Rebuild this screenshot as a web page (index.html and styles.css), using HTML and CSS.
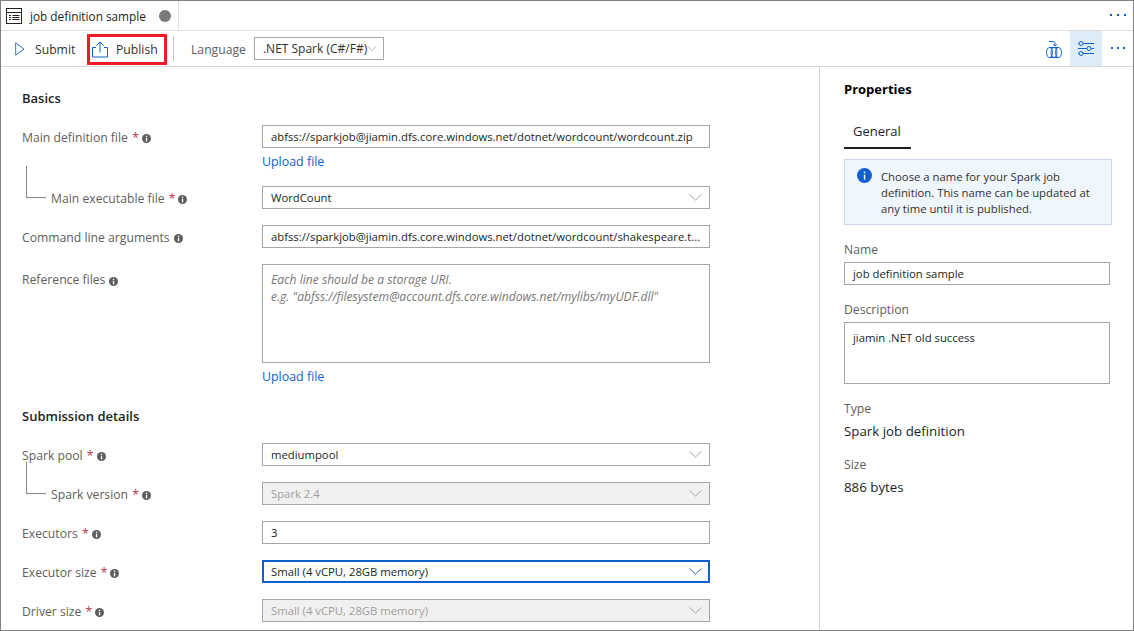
FILE: index.html
```html
<!DOCTYPE html>
<html lang="en">
<head>
  <meta charset="UTF-8">
  <title>job definition sample</title>
  <link rel="stylesheet" href="styles.css">
</head>
<body>
  <svg class="defs" width="0" height="0" aria-hidden="true">
    <symbol id="info" viewBox="0 0 9 9">
      <circle cx="4.5" cy="4.5" r="4.5" fill="#605e5c"/>
      <rect x="3.9" y="3.8" width="1.3" height="3.6" fill="#fff"/>
      <rect x="3.9" y="1.7" width="1.3" height="1.3" fill="#fff"/>
    </symbol>
    <symbol id="chev" viewBox="0 0 13 7">
      <path d="M.5.5l6 5.500 6-5.500" fill="none" stroke="currentColor" stroke-width="1"/>
    </symbol>
    <symbol id="dots" viewBox="0 0 16 3">
      <rect x="0" y="0" width="2" height="2" fill="#0f62c9"/>
      <rect x="7" y="0" width="2" height="2" fill="#0f62c9"/>
      <rect x="14" y="0" width="2" height="2" fill="#0f62c9"/>
    </symbol>
    <symbol id="dots-sm" viewBox="0 0 14 3">
      <rect x="0" y="0" width="2" height="2" fill="#0f62c9"/>
      <rect x="6" y="0" width="2" height="2" fill="#0f62c9"/>
      <rect x="12" y="0" width="2" height="2" fill="#0f62c9"/>
    </symbol>
  </svg>

  <div class="window">
    <header class="tabbar">
      <div class="tab">
        <svg class="tab-icon" width="16" height="16" viewBox="0 0 16 16">
          <rect x="0.5" y="0.5" width="15" height="15" fill="none" stroke="#222"/>
          <path d="M1 4.500h14M3 7.500h2M6.500 7.500h7M3 9.500h2M6.500 9.500h7M3 11.500h2M6.500 11.500h7" stroke="#222" fill="none"/>
        </svg>
        <span class="tab-title">job definition sample</span>
        <span class="dirty-dot"></span>
      </div>
      <svg class="more" width="16" height="3"><use href="#dots"/></svg>
    </header>

    <div class="toolbar">
      <button class="tool tool-submit">
        <svg width="10" height="14" viewBox="0 0 10 14"><path d="M.7.9v12.200l8.300-6.100z" fill="none" stroke="#2b6fd6"/></svg>
        <span>Submit</span>
      </button>
      <button class="tool tool-publish">
        <svg width="16" height="17" viewBox="0 0 16 17"><path d="M4 6.500H.5v9.500h15V6.500H12M8 11.500V1M4.300 4.700L8 1l3.700 3.700" fill="none" stroke="#0f62c9"/></svg>
        <span>Publish</span>
      </button>
      <span class="divider"></span>
      <span class="lang-label">Language</span>
      <div class="lang-select">
        <span>.NET Spark (C#/F#)</span>
        <svg class="chev" width="12" height="7"><use href="#chev"/></svg>
      </div>
      <div class="toolbar-right">
        <button class="icon-btn">
          <svg width="16" height="19" viewBox="0 0 16 19" fill="none" stroke="#0f62c9">
            <path d="M3 2.500h4c1.200 0 2 .8 2 2v2.500M7 5.200l2 2 2-2"/>
            <ellipse cx="3.500" cy="13.500" rx="3" ry="5"/>
            <ellipse cx="8" cy="13.500" rx="3" ry="5"/>
            <ellipse cx="12.500" cy="13.500" rx="3" ry="5"/>
            <path d="M3.500 8.500h9M3.500 18.500h9"/>
          </svg>
        </button>
        <button class="icon-btn icon-btn-on">
          <svg width="16" height="15" viewBox="0 0 16 15" fill="none" stroke="#0f62c9">
            <path d="M0 2.500h1M5 2.500h11M0 7.500h9M13 7.500h3M0 12.500h1M5 12.500h11"/>
            <circle cx="3" cy="2.500" r="2"/><circle cx="11" cy="7.500" r="2"/><circle cx="3" cy="12.500" r="2"/>
          </svg>
        </button>
        <button class="icon-btn icon-btn-last">
          <svg width="14" height="3"><use href="#dots-sm"/></svg>
        </button>
      </div>
    </div>

    <div class="content">
      <main class="form">
        <h2 class="section-title">Basics</h2>

        <div class="row">
          <div class="label">Main definition file <i class="req">*</i><svg class="info" width="9" height="9"><use href="#info"/></svg></div>
          <div class="control">
            <div class="input">abfss://sparkjob@jiamin.dfs.core.windows.net/dotnet/wordcount/wordcount.zip</div>
            <a class="upload">Upload file</a>
          </div>
        </div>

        <div class="row">
          <div class="label label-sub"><span class="elbow"></span>Main executable file <i class="req">*</i><svg class="info" width="9" height="9"><use href="#info"/></svg></div>
          <div class="control">
            <div class="input select">WordCount<svg class="chev" width="13" height="7"><use href="#chev"/></svg></div>
          </div>
        </div>

        <div class="row">
          <div class="label">Command line arguments<svg class="info" width="9" height="9"><use href="#info"/></svg></div>
          <div class="control">
            <div class="input">abfss://sparkjob@jiamin.dfs.core.windows.net/dotnet/wordcount/shakespeare.t...</div>
          </div>
        </div>

        <div class="row">
          <div class="label label-low">Reference files<svg class="info" width="9" height="9"><use href="#info"/></svg></div>
          <div class="control">
            <div class="textarea placeholder">Each line should be a storage URI.<br>e.g. "abfss://filesystem@account.dfs.core.windows.net/mylibs/myUDF.dll"</div>
            <a class="upload">Upload file</a>
          </div>
        </div>

        <h2 class="section-title section-second">Submission details</h2>

        <div class="row">
          <div class="label">Spark pool <i class="req">*</i><svg class="info" width="9" height="9"><use href="#info"/></svg></div>
          <div class="control">
            <div class="input select">mediumpool<svg class="chev" width="13" height="7"><use href="#chev"/></svg></div>
          </div>
        </div>

        <div class="row">
          <div class="label label-sub"><span class="elbow"></span>Spark version <i class="req">*</i><svg class="info" width="9" height="9"><use href="#info"/></svg></div>
          <div class="control">
            <div class="input select disabled">Spark 2.4<svg class="chev" width="13" height="7"><use href="#chev"/></svg></div>
          </div>
        </div>

        <div class="row">
          <div class="label">Executors <i class="req">*</i><svg class="info" width="9" height="9"><use href="#info"/></svg></div>
          <div class="control">
            <div class="input">3</div>
          </div>
        </div>

        <div class="row">
          <div class="label">Executor size <i class="req">*</i><svg class="info" width="9" height="9"><use href="#info"/></svg></div>
          <div class="control">
            <div class="input select focused">Small (4 vCPU, 28GB memory)<svg class="chev" width="13" height="7"><use href="#chev"/></svg></div>
          </div>
        </div>

        <div class="row">
          <div class="label">Driver size <i class="req">*</i><svg class="info" width="9" height="9"><use href="#info"/></svg></div>
          <div class="control">
            <div class="input select disabled">Small (4 vCPU, 28GB memory)<svg class="chev" width="13" height="7"><use href="#chev"/></svg></div>
          </div>
        </div>
      </main>

      <aside class="props">
        <h2 class="props-title">Properties</h2>
        <div class="props-tab">General</div>
        <div class="notice">
          <svg class="notice-icon" width="15" height="15" viewBox="0 0 15 15">
            <circle cx="7.500" cy="7.500" r="7.500" fill="#0f5fd0"/>
            <rect x="6.800" y="6.500" width="1.500" height="5" fill="#fff"/>
            <rect x="6.800" y="3.600" width="1.500" height="1.500" fill="#fff"/>
          </svg>
          <p>Choose a name for your Spark job definition. This name can be updated at any time until it is published.</p>
        </div>
        <div class="prop-label">Name</div>
        <div class="input prop-input">job definition sample</div>
        <div class="prop-label">Description</div>
        <div class="input prop-textarea">jiamin .NET old success</div>
        <div class="prop-label">Type</div>
        <div class="prop-value">Spark job definition</div>
        <div class="prop-label">Size</div>
        <div class="prop-value">886 bytes</div>
      </aside>
    </div>
  </div>
</body>
</html>
```

FILE: styles.css
```css
* {
  box-sizing: border-box;
}
html, body {
  margin: 0;
  height: 100%;
}
body {
  font-family: "Open Sans", "Noto Sans", sans-serif;
  font-size: 12.2px;
  color: #252423;
  overflow: hidden;
}
.defs {
  display: block;
  height: 0;
}
.window {
  height: 631px;
  border: 1px solid #808080;
  display: flex;
  flex-direction: column;
  overflow: hidden;
}

/* tabs */
.tabbar {
  height: 30px;
  flex: none;
  display: flex;
  align-items: center;
  justify-content: space-between;
  border-bottom: 1px solid #e1dfdd;
  padding-right: 7px;
}
.tab {
  height: 29px;
  width: 178px;
  display: flex;
  align-items: center;
  padding-left: 5px;
  border-right: 1px solid #e1dfdd;
}
.tab-title {
  margin-left: 8px;
  font-size: 11.8px;
  color: #201f1e;
}
.dirty-dot {
  width: 12px;
  height: 12px;
  border-radius: 50%;
  background: #7a7a7a;
  margin-left: 13px;
}
.more {
  display: block;
}

/* toolbar */
.toolbar {
  height: 36px;
  flex: none;
  display: flex;
  align-items: center;
  border-bottom: 1px solid #d8d8d8;
}
.tool {
  display: flex;
  align-items: center;
  background: none;
  border: 0;
  padding: 0;
  font: inherit;
  color: #323130;
}
.tool-submit {
  margin-left: 14px;
  width: 72px;
}
.tool-submit span {
  margin-left: 10px;
  margin-top: 2px;
}
.tool-publish {
  width: 80px;
  height: 31px;
  margin-top: 2px;
  border: 3px solid #ed1c24;
  padding-left: 2px;
}
.tool-publish span {
  margin-left: 8px;
}
.divider {
  width: 1px;
  height: 25px;
  background: #c8c6c4;
  margin-left: 6px;
}
.lang-label {
  margin-left: 17px;
  margin-top: 2px;
  color: #605e5c;
}
.lang-select {
  width: 130px;
  height: 23px;
  margin-left: 8px;
  border: 1px solid #a6a6a6;
  display: flex;
  align-items: center;
  justify-content: space-between;
  padding: 0 6px 0 8px;
  font-size: 12px;
  color: #323130;
  white-space: nowrap;
}
.lang-select .chev {
  color: #a6a6a6;
}
.toolbar-right {
  margin-left: auto;
  display: flex;
  align-items: center;
  height: 35px;
}
.icon-btn {
  width: 32px;
  height: 35px;
  padding: 0;
  background: none;
  border: 0;
  display: flex;
  align-items: center;
  justify-content: center;
}
.icon-btn-on {
  background: #deecf9;
}
.icon-btn-last {
  width: 31px;
  padding-left: 1px;
}

/* main area */
.content {
  flex: 1;
  display: flex;
  min-height: 0;
}
.form {
  width: 819px;
  flex: none;
  border-right: 1px solid #d0d0d0;
  padding: 23px 0 0 21px;
}
.section-title {
  font-size: 13px;
  font-weight: 600;
  color: #201f1e;
  margin: 0 0 18px;
  line-height: 17px;
}
.section-second {
  margin-top: 23px;
}
.row {
  display: grid;
  grid-template-columns: 240px 448px;
  margin-bottom: 16px;
}
.label {
  color: #605e5c;
  padding-top: 2px;
  line-height: 21px;
  display: flex;
  align-items: flex-start;
  white-space: pre;
}
.label-low {
  padding-top: 5px;
}
.req {
  color: #c4314b;
  font-style: normal;
  margin-left: 1px;
  margin-right: -1px;
}
.info {
  margin-top: 7px;
  margin-left: 4px;
}
.label-low .info {
  margin-top: 8px;
}
.label-sub {
  padding-left: 4px;
}
.elbow {
  width: 20px;
  height: 32px;
  margin-top: -22px;
  margin-right: 5px;
  flex: none;
  border-left: 1px solid #8a8886;
  border-bottom: 1px solid #8a8886;
}
.input {
  height: 23px;
  border: 1px solid #a6a6a6;
  padding: 0 8px;
  font-size: 11.3px;
  line-height: 21px;
  color: #201f1e;
  white-space: nowrap;
  overflow: hidden;
}
.select {
  display: flex;
  align-items: center;
  justify-content: space-between;
  padding-right: 7px;
}
.select .chev {
  color: #a6a6a6;
}
.disabled {
  background: #f0f0f0;
  color: #a19f9d;
}
.focused {
  border: 2px solid #0f5fd0;
  padding-left: 7px;
  padding-right: 6px;
}
.focused .chev {
  color: #3a6ea5;
}
.textarea {
  height: 99px;
  border: 1px solid #a6a6a6;
  padding: 6px 8px;
  line-height: 17px;
}
.placeholder {
  color: #797775;
  font-style: italic;
  font-size: 12.1px;
}
.upload {
  display: block;
  margin-top: 5px;
  line-height: 17px;
  font-size: 12.4px;
  color: #0f62c9;
}

/* properties */
.props {
  flex: 1;
  padding: 13px 21px 0 24px;
}
.props-title {
  font-size: 13px;
  font-weight: 700;
  color: #000;
  margin: 0;
  line-height: 18px;
}
.props-tab {
  width: 67px;
  height: 27px;
  margin-top: 24px;
  padding-left: 9px;
  font-size: 13px;
  line-height: 18px;
  border-bottom: 2px solid #201f1e;
}
.notice {
  margin-top: 10px;
  height: 66px;
  display: flex;
  padding: 8px 12px;
  background: #eff6fc;
  border: 1px solid #c9d6e8;
}
.notice p {
  margin: 1px 0 0 9px;
  font-size: 11.3px;
  line-height: 16px;
  color: #323130;
}
.notice-icon {
  flex: none;
}
.prop-label {
  margin-top: 16px;
  line-height: 18px;
  color: #605e5c;
}
.prop-input {
  width: 266px;
  margin-top: 3px;
}
.prop-textarea {
  width: 266px;
  height: 62px;
  margin-top: 3px;
  padding-top: 4px;
}
.prop-value {
  margin-top: 4px;
  font-size: 13.3px;
  line-height: 18px;
  color: #201f1e;
}
```
